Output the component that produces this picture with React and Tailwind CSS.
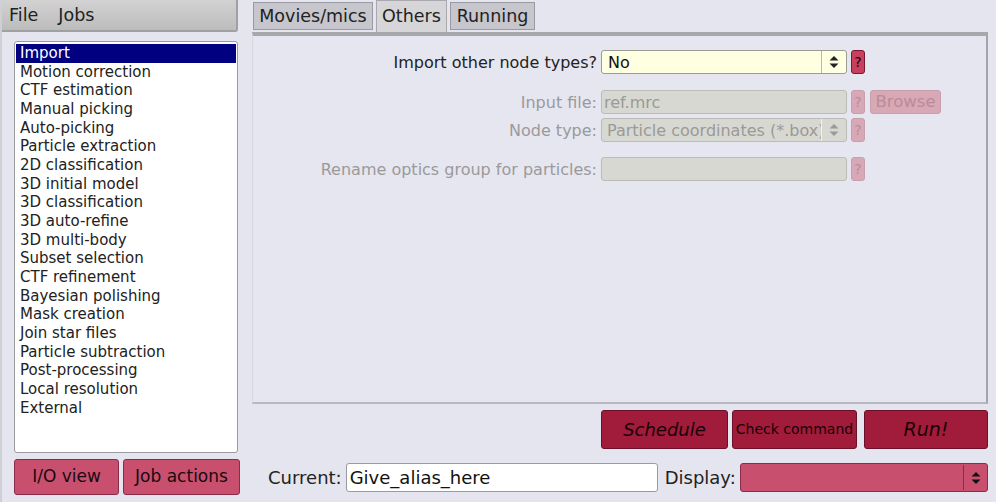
import React from "react";

const jobs = [
  "Import","Motion correction","CTF estimation","Manual picking","Auto-picking","Particle extraction","2D classification","3D initial model","3D classification","3D auto-refine","3D multi-body","Subset selection","CTF refinement","Bayesian polishing","Mask creation","Join star files","Particle subtraction","Post-processing","Local resolution","External",
];

function Arrows({ color = "#222" }) {
  return (
    <svg width="10" height="14" viewBox="0 0 10 14">
      <polygon points="5,1 9.5,5.5 0.5,5.5" fill={color} />
      <polygon points="5,13 9.5,8.5 0.5,8.5" fill={color} />
    </svg>
  );
}

function Help({ disabled }) {
  return (
    <div
      className={
        disabled
          ? "w-[14px] h-[24px] rounded-[3px] border border-[#c8a0ac] bg-[#d8a8b6] text-[#b88c98] flex items-center justify-center text-[14px]"
          : "w-[14px] h-[24px] rounded-[3px] border border-[#7a1830] bg-[#c8405e] text-[#1a0008] flex items-center justify-center text-[14px]"
      }
    >
      ?
    </div>
  );
}

export default function App() {
  return (
    <div
      className="w-[996px] h-[502px] bg-[#e5e5ef] flex overflow-hidden text-[#222]"
      style={{ fontFamily: '"DejaVu Sans", sans-serif' }}
    >
      {/* Left column */}
      <div className="w-[250px] flex flex-col border-l-2 border-[#cfcfd6]">
        <div className="w-[236px] h-[32px] bg-gradient-to-b from-[#d2d2d2] to-[#bcbcbc] border-r-2 border-b-2 border-[#a0a0a0] rounded-br-[3px] flex items-center text-[17.5px] text-[#222]">
          <span className="ml-[7px]">File</span>
          <span className="ml-[20px]">Jobs</span>
        </div>
        <div className="ml-[12px] mt-[9px] w-[224px] h-[412px] bg-white border border-[#9a9aa0] rounded-[3px] pt-[2px] px-[1px] text-[15px]">
          {jobs.map((j, i) => (
            <div
              key={j}
              className={
                i === 0
                  ? "h-[18.68px] leading-[18.68px] pl-[4px] bg-[#000080] text-white"
                  : "h-[18.68px] leading-[18.68px] pl-[4px] text-[#222]"
              }
            >
              {j}
            </div>
          ))}
        </div>
        <div className="ml-[12px] mt-[6px] flex gap-[4px]">
          <div className="w-[105px] h-[36px] rounded-[3px] border border-[#8a2c48] bg-[#c8506e] flex items-center justify-center text-[17px] text-[#1a0a10]">
            I/O view
          </div>
          <div className="w-[117px] h-[36px] rounded-[3px] border border-[#8a2c48] bg-[#c8506e] flex items-center justify-center text-[17px] text-[#1a0a10]">
            Job actions
          </div>
        </div>
      </div>

      {/* Right column */}
      <div className="flex-1 flex flex-col pr-[8px]">
        {/* tabs */}
        <div className="h-[32px] flex items-end pl-[3px] gap-[3px]">
          <div className="w-[120px] h-[28px] mb-[2px] bg-[#c6c6cc] border border-[#9a9aa2] flex items-center justify-center pt-[1px] text-[17.5px] text-[#222]">
            Movies/mics
          </div>
          <div className="w-[71px] h-[32px] bg-[#d6d6d8] border border-[#a8a8ae] border-b-0 flex items-center justify-center text-[17.5px] text-[#222]">
            Others
          </div>
          <div className="w-[85px] h-[28px] mb-[2px] bg-[#c6c6cc] border border-[#9a9aa2] flex items-center justify-center pt-[1px] text-[17.5px] text-[#222]">
            Running
          </div>
        </div>
        {/* panel */}
        <div className="ml-[2px] h-[372px] border-t-[4px] border-t-[#a8a8ac] border-r-2 border-r-[#a4a4ac] border-b-2 border-b-[#b8b8c0] border-l border-l-[#d8d8e0] bg-[#e6e6f0] flex flex-col text-[16px]">
          <div className="mt-[14px] flex items-center h-[24px]">
            <div className="w-[344px] text-right text-[#222] whitespace-nowrap pt-[1px]">Import other node types?</div>
            <div className="ml-[4px] w-[246px] h-[24px] bg-[#ffffe2] border border-[#9c9c94] rounded-[3px] flex items-center">
              <span className="flex-1 pl-[6px] pt-[1px] text-[#111]">No</span>
              <div className="w-[25px] h-[22px] border-l border-[#b8b8b0] flex items-center justify-center">
                <Arrows />
              </div>
            </div>
            <div className="ml-[4px]"><Help /></div>
          </div>

          <div className="mt-[16px] flex items-center h-[24px]">
            <div className="w-[344px] text-right text-[#9a9a9a] whitespace-nowrap pt-[1px]">Input file:</div>
            <div className="ml-[4px] w-[246px] h-[24px] bg-[#d8d8d2] border border-[#bcbcb4] rounded-[3px] flex items-center pl-[2px] pt-[1px] text-[#9a9a96]">
              ref.mrc
            </div>
            <div className="ml-[4px]"><Help disabled /></div>
            <div className="ml-[5px] w-[71px] h-[24px] rounded-[3px] border border-[#c8a0ac] bg-[#d8a8b6] text-[#b88c98] flex items-center justify-center pt-[1px] text-[16.5px]">
              Browse
            </div>
          </div>

          <div className="mt-[4px] flex items-center h-[24px]">
            <div className="w-[344px] text-right text-[#9a9a9a] whitespace-nowrap pt-[1px]">Node type:</div>
            <div className="ml-[4px] w-[246px] h-[24px] bg-[#d8d8d2] border border-[#bcbcb4] rounded-[3px] flex items-center overflow-hidden">
              <span className="flex-1 min-w-0 pl-[5px] pt-[1px] text-[#9a9a96] whitespace-nowrap overflow-hidden">Particle coordinates (*.box)</span>
              <div className="w-[25px] h-[22px] shrink-0 border-l border-[#f4f4e4] flex items-center justify-center">
                <Arrows color="#9a9a96" />
              </div>
            </div>
            <div className="ml-[4px]"><Help disabled /></div>
          </div>

          <div className="mt-[15px] flex items-center h-[24px]">
            <div className="w-[344px] text-right text-[#9a9a9a] whitespace-nowrap pt-[1px]">Rename optics group for particles:</div>
            <div className="ml-[4px] w-[246px] h-[24px] bg-[#d8d8d2] border border-[#bcbcb4] rounded-[3px]"></div>
            <div className="ml-[4px]"><Help disabled /></div>
          </div>
        </div>

        {/* action buttons */}
        <div className="mt-[6px] flex justify-end">
          <div className="w-[127px] h-[39px] rounded-[3px] border border-[#6a1028] bg-[#a01c3a] flex items-center justify-center text-[18px] italic text-[#1a0008]">
            Schedule
          </div>
          <div className="ml-[4px] w-[125px] h-[39px] rounded-[3px] border border-[#6a1028] bg-[#a01c3a] flex items-center justify-center text-[14px] text-[#1a0008] whitespace-nowrap">
            Check command
          </div>
          <div className="ml-[7px] w-[124px] h-[39px] rounded-[3px] border border-[#6a1028] bg-[#a01c3a] flex items-center justify-center text-[19px] italic text-[#1a0008]">
            Run!
          </div>
        </div>

        {/* current row */}
        <div className="mt-[14px] flex items-center h-[29px] text-[18px]">
          <span className="ml-[18px] text-[#222]">Current:</span>
          <div className="ml-[4px] w-[312px] h-[29px] bg-white border border-[#9a9aa0] rounded-[3px] flex items-center pl-[3px] text-[#111]">
            Give_alias_here
          </div>
          <span className="ml-[7px] text-[#222]">Display:</span>
          <div className="ml-[4px] flex-1 h-[29px] bg-[#c8506e] border border-[#8a2c48] rounded-[3px] flex items-center justify-end">
            <div className="w-[24px] h-[25px] border-l border-[#8a2c48] flex items-center justify-center">
              <Arrows color="#111" />
            </div>
          </div>
        </div>
      </div>
    </div>
  );
}
